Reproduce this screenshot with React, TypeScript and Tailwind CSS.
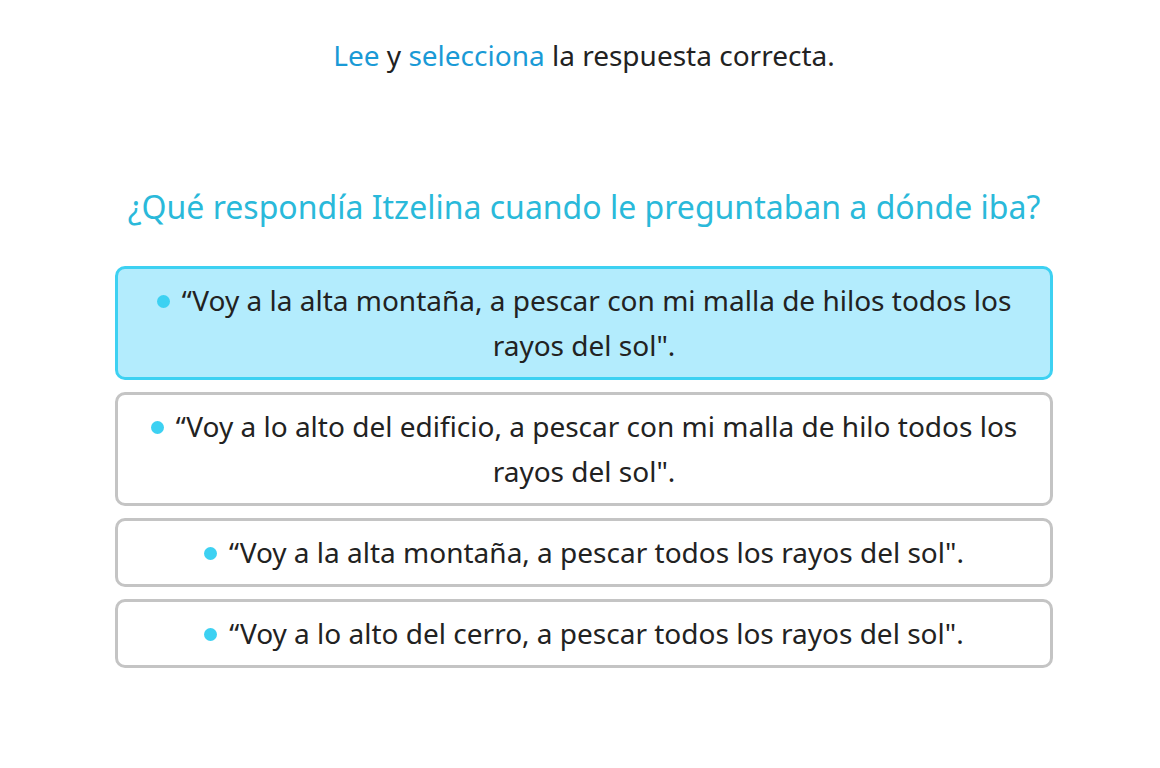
const options = [
  { text: "“Voy a la alta montaña, a pescar con mi malla de hilos todos los rayos del sol\".", selected: true },
  { text: "“Voy a lo alto del edificio, a pescar con mi malla de hilo todos los rayos del sol\".", selected: false },
  { text: "“Voy a la alta montaña, a pescar todos los rayos del sol\".", selected: false },
  { text: "“Voy a lo alto del cerro, a pescar todos los rayos del sol\".", selected: false },
]

export default function App() {
  return (
    <main className="min-h-screen bg-white font-['Noto_Sans',sans-serif] text-[#222]">
      <div className="w-[938px] ml-[115px] pt-[34px]">
        <p className="text-center text-[28px] leading-[42px]">
          <span className="text-[#1a9ad6]">Lee</span> y <span className="text-[#1a9ad6]">selecciona</span> la respuesta correcta.
        </p>

        <h2 className="mt-[110px] text-center text-[32px] leading-[42px] text-[#2ab9da]">
          ¿Qué respondía Itzelina cuando le preguntaban a dónde iba?
        </h2>

        {/* Options */}
        <div className="mt-[38px] flex flex-col gap-3">
          {options.map((o, i) => (
            <button
              key={i}
              className={`w-full rounded-[10px] border-[3px] px-[28px] py-[9px] text-center text-[28px] leading-[45px] ${
                o.selected ? "bg-[#b3ecfd] border-[#3dd1f2]" : "bg-white border-[#c4c4c4]"
              }`}
            >
              <span className="inline-block w-[13px] h-[13px] rounded-full bg-[#3dd1f2] mr-[12px] align-middle relative -top-[2px]" />
              {o.text}
            </button>
          ))}
        </div>
      </div>
    </main>
  )
}
